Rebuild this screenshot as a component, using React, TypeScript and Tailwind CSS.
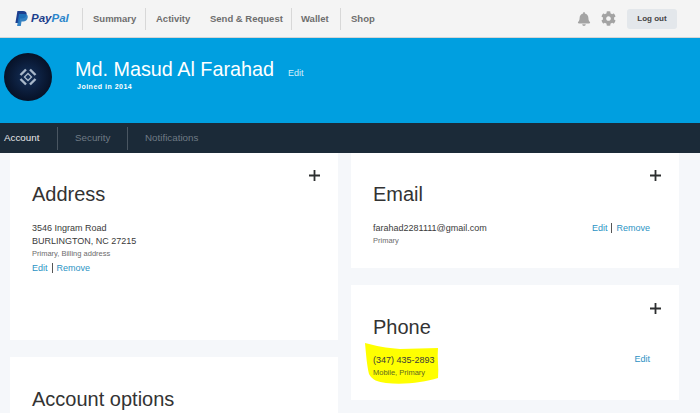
import { FaBell, FaCog } from "react-icons/fa";

const sans = "font-['Liberation_Sans',Arial,sans-serif]";

function NavItem({ label, divider, className }: { label: string; divider?: boolean; className: string }) {
  return (
    <div className={`flex h-[22px] items-center ${divider ? "border-r border-[#d8d8d8]" : ""} ${className}`}>
      <span className="text-[9.5px] font-bold leading-none text-[#6e6e6e]">{label}</span>
    </div>
  );
}

function PayPalLogo() {
  return (
    <div className="flex w-[72px] items-center pl-[15px]">
      <svg width="13" height="15" viewBox="0 0 13 15" className="shrink-0">
        <path d="M2.4 0h5.6c2.6 0 4 1.3 3.6 3.6-.4 2.6-2.2 4-4.8 4H5L4.2 12H.4z" fill="#1d3f8f" />
        <path d="M4 3h5.4c2.4 0 3.7 1.3 3.3 3.5-.4 2.5-2.1 3.9-4.6 3.9H6.5L5.8 15H2.1z" fill="#1f74bd" opacity="0.9" />
      </svg>
      <span className="ml-[3px] text-[11.5px] font-bold italic leading-none text-[#1c3f8c]">
        Pay<span className="text-[#2b86cc]">Pal</span>
      </span>
    </div>
  );
}

function Avatar() {
  return (
    <div className="flex h-12 w-12 shrink-0 items-center justify-center rounded-full bg-[radial-gradient(circle_at_50%_50%,#14305a_0%,#0a1a36_50%,#020612_100%)]">
      <svg width="18" height="18" viewBox="0 0 18 18" fill="none" stroke="#a9b8ca">
        <rect x="6.5" y="6.5" width="5" height="5" strokeWidth="1.3" transform="rotate(45 9 9)" />
        <path d="M1.5 7 L7 1.5 M11 1.5 L16.5 7 M16.5 11 L11 16.5 M7 16.5 L1.5 11" strokeWidth="2.4" />
      </svg>
    </div>
  );
}

function Plus() {
  return (
    <svg width="11" height="11" viewBox="0 0 11 11" className="text-[#2c2e2f]">
      <path d="M5.5 0v11M0 5.5h11" stroke="currentColor" strokeWidth="1.8" />
    </svg>
  );
}

function Card({ title, className, children }: { title: string; className: string; children?: React.ReactNode }) {
  return (
    <div className={`relative w-[328px] bg-white ${className}`}>
      <div className="flex justify-end pr-[18px] pt-[17px]">
        <Plus />
      </div>
      <h2 className="ml-[22px] mt-[1px] text-[20px] font-normal leading-[24px] text-[#333]">{title}</h2>
      {children}
    </div>
  );
}

function Links({ remove }: { remove?: boolean }) {
  return (
    <div className="flex items-center text-[9px] leading-none text-[#2c93c4]">
      <span>Edit</span>
      {remove && (
        <>
          <span className="mx-[4px] h-[10px] w-px bg-[#555]" />
          <span>Remove</span>
        </>
      )}
    </div>
  );
}

export default function App() {
  return (
    <div className={`h-[413px] w-[700px] overflow-hidden bg-[#f5f7fa] ${sans}`}>
      {/* top nav */}
      <div className="flex h-[38px] items-center border-b border-[#d5d5d5] bg-[#f4f4f4]">
        <PayPalLogo />
        <div className="ml-[10px] h-[22px] w-px bg-[#d8d8d8]" />
        <NavItem label="Summary" divider className="w-[63px] pl-[10px]" />
        <NavItem label="Activity" className="w-[64px] pl-[10px]" />
        <NavItem label="Send & Request" divider className="w-[82px]" />
        <NavItem label="Wallet" divider className="w-[49px] pl-[9px]" />
        <NavItem label="Shop" className="w-[60px] pl-[10px]" />
        <div className="ml-auto flex items-center">
          <FaBell size={14} color="#a3a3a3" />
          <FaCog size={15} className="ml-[10px]" color="#a3a3a3" />
          <button className="ml-[11px] mr-[23px] h-5 w-[50px] rounded-[3px] bg-[#e3e7eb] text-[8px] font-bold text-[#444]">
            Log out
          </button>
        </div>
      </div>

      {/* profile banner */}
      <div className="flex h-[85px] bg-[#009fe0] pl-[4px] pt-[15px]">
        <Avatar />
        <div className="ml-[23px] mt-[4px]">
          <div className="flex items-baseline">
            <span className="text-[19.8px] leading-[25px] text-white">Md. Masud Al Farahad</span>
            <span className="ml-[14px] text-[9px] text-[#d5effa]">Edit</span>
          </div>
          <div className="ml-[2px] text-[7px] font-bold leading-[10px] tracking-[0.5px] text-white">Joined in 2014</div>
        </div>
      </div>

      {/* sub nav */}
      <div className="flex h-[30px] items-center bg-[#1b2a38] text-[9.8px] leading-none">
        <div className="flex h-[23px] w-[58px] items-center border-r border-[#4a5662] pl-[4px] text-[#e6e8ea]">Account</div>
        <div className="flex h-[23px] w-[70px] items-center border-r border-[#4a5662] pl-[17px] text-[#6f7a85]">Security</div>
        <div className="pl-[17px] text-[#6f7a85]">Notifications</div>
      </div>

      {/* cards */}
      <div className="flex gap-[13px] pl-[10px]">
        <div className="flex flex-col gap-[17px]">
          <Card title="Address" className="h-[187px]">
            <div className="ml-[22px] mt-[16px] text-[9px] leading-[13px] text-[#3a3a3a]">
              <div>3546 Ingram Road</div>
              <div>BURLINGTON, NC 27215</div>
              <div className="text-[7.5px] leading-[11px] text-[#6c6c6c]">Primary, Billing address</div>
            </div>
            <div className="ml-[22px] mt-[4px]">
              <Links remove />
            </div>
          </Card>
          <div className="h-[60px] w-[328px] bg-white">
            <h2 className="ml-[22px] pt-[30px] text-[20px] font-normal leading-[24px] text-[#333]">Account options</h2>
          </div>
        </div>

        <div className="flex flex-col gap-[17px]">
          <Card title="Email" className="h-[115px]">
            <div className="mx-[22px] mt-[16px] flex items-start justify-between">
              <div>
                <div className="text-[9px] leading-[13px] text-[#3a3a3a]">farahad2281111@gmail.com</div>
                <div className="text-[7.5px] leading-[11px] text-[#6c6c6c]">Primary</div>
              </div>
              <div className="mr-[7px] mt-[1px]">
                <Links remove />
              </div>
            </div>
          </Card>
          <Card title="Phone" className="h-[115px] pt-[1px]">
            {/* marker scribble over the number */}
            <svg width="76" height="44" viewBox="0 0 76 44" className="absolute left-[13px] top-[57px]">
              <path
                d="M1 1 C12 4 22 6 36 7 L74 6 C73 16 75 26 74 36 C60 40 42 43 22 41 C14 40 8 38 5 32 C3 24 2 12 1 1 Z"
                fill="#ffff00"
              />
            </svg>
            <div className="relative mx-[22px] mt-[15px] flex items-start justify-between">
              <div>
                <div className="text-[9px] leading-[13px] text-[#3a3a3a]">(347) 435-2893</div>
                <div className="text-[7.5px] leading-[11px] text-[#5f6a20]">Mobile, Primary</div>
              </div>
              <div className="mr-[7px] mt-[1px]">
                <Links />
              </div>
            </div>
          </Card>
        </div>
      </div>
    </div>
  );
}
